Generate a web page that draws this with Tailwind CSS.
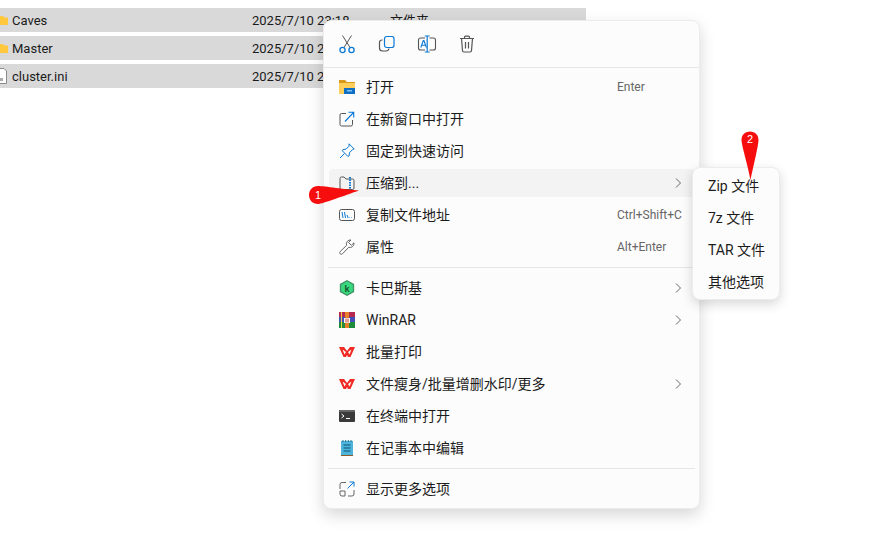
<!DOCTYPE html>
<html><head><meta charset="utf-8"><script src="https://cdn.jsdelivr.net/npm/@tailwindcss/browser@4"></script></head>
<body class="bg-white overflow-hidden">
<div class="relative w-[893px] h-[554px] overflow-hidden bg-white text-[#1b1b1b] font-['Roboto','Noto_Sans_CJK_SC',sans-serif]">
  <div class="flex flex-col gap-1 pt-2 w-[586px] text-[13px] leading-6">
    <div class="h-6 bg-[#d9d9d9] flex items-center">
      <svg class="w-2 h-6 shrink-0 mr-1" viewBox="0 0 8 24"><path d="M0 8h3l1.500 1.500H8V17H0z" fill="#ffc83d"/></svg>
      <span class="w-[240px] pt-px">Caves</span><span class="w-[138px] pt-px">2025/7/10 23:18</span><span class="pt-px">文件夹</span>
    </div>
    <div class="h-6 bg-[#d9d9d9] flex items-center">
      <svg class="w-2 h-6 shrink-0 mr-1" viewBox="0 0 8 24"><path d="M0 8h3l1.500 1.500H8V17H0z" fill="#ffc83d"/></svg>
      <span class="w-[240px] pt-px">Master</span><span class="pt-px">2025/7/10 23:18</span>
    </div>
    <div class="h-6 bg-[#d9d9d9] flex items-center">
      <svg class="w-2 h-6 shrink-0 mr-1" viewBox="0 0 8 24"><path d="M-2 4.500h6l2.500 2.500v12.500H-2z" fill="#fff" stroke="#8a8a8a"/><path d="M0 14h3v3H0z" fill="#aaa"/></svg>
      <span class="w-[240px] pt-px">cluster.ini</span><span class="pt-px">2025/7/10 23:18</span>
    </div>
  </div>

  <!-- main context menu -->
  <div class="absolute left-[323px] top-[20px] w-[377px] h-[489px] rounded-lg bg-[#fcfcfc] border border-[#ececec] shadow-[0_6px_16px_rgba(0,0,0,0.16)] text-[14px] flex flex-col">
    <div class="h-[46px] flex items-center gap-[20px] pl-[13px] shrink-0">
      <svg class="w-5 h-5" viewBox="0 0 20 20" fill="none"><path d="M5.500 1.500l7.500 12M14.500 1.500L7 13.500" stroke="#555" stroke-width="1"/><circle cx="5.500" cy="16" r="2.600" stroke="#0a78d4" stroke-width="1.300"/><circle cx="14.500" cy="16" r="2.600" stroke="#0a78d4" stroke-width="1.300"/></svg>
      <svg class="w-5 h-5" viewBox="0 0 20 20" fill="none"><rect x="7.500" y="2.500" width="9.500" height="11" rx="2.200" stroke="#0a78d4" stroke-width="1.200"/><path d="M5.500 6H5a2.500 2.500 0 0 0-2.500 2.500V14A3 3 0 0 0 5.500 17H9a3 3 0 0 0 3-2.500" stroke="#555" stroke-width="1.200"/></svg>
      <svg class="w-5 h-5" viewBox="0 0 20 20" fill="none"><path d="M8 4H3.500a2 2 0 0 0-2 2v8a2 2 0 0 0 2 2H8M12.500 4h4a2 2 0 0 1 2 2v8a2 2 0 0 1-2 2h-4" stroke="#555" stroke-width="1.100"/><path d="M7.800 2h4.900M7.800 18h4.900M10.200 2v16" stroke="#0a78d4" stroke-width="1.200"/><path d="M3.800 13.500L6.300 6.500h.6l2.500 7M4.700 11.300h3.800" stroke="#0a78d4" stroke-width="1.100"/></svg>
      <svg class="w-5 h-5" viewBox="0 0 20 20" fill="none"><path d="M3 4.500h14M7.500 4.500V3.200a1 1 0 0 1 1-1h3a1 1 0 0 1 1 1v1.300M4.500 4.500l1 12a1.500 1.500 0 0 0 1.500 1.500h6a1.500 1.500 0 0 0 1.500-1.500l1-12M8.500 8v6.500M11.500 8v6.500" stroke="#555" stroke-width="1.200"/></svg>
    </div>
    <div class="h-px bg-[#e6e6e6] shrink-0"></div>

    <div class="flex flex-col px-[5px] pt-[3px]">
      <div class="h-7 my-0.5 flex items-center rounded pl-[10px] pr-[10px]">
        <svg class="w-4 h-4 mr-[11px] shrink-0" viewBox="0 0 16 16"><path d="M0 1h6l2 2h8v2H0z" fill="#d99a1c"/><path d="M0 4h16v11H0z" fill="#ffcf5c"/><path d="M5 9h11v6H5z" fill="#0f6fc4"/><path d="M8 11h5v1.500H8z" fill="#7fc0f0"/></svg>
        <span class="flex-1">打开</span><span class="text-[12px] text-[#666] w-[67px]">Enter</span>
      </div>
      <div class="h-7 my-0.5 flex items-center rounded pl-[10px] pr-[10px]">
        <svg class="w-4 h-4 mr-[11px] shrink-0" viewBox="0 0 16 16" fill="none"><path d="M7 2.500H2.500a1.500 1.500 0 0 0-1.500 1.500v9.500A1.500 1.500 0 0 0 2.500 15H12a1.500 1.500 0 0 0 1.500-1.500V9" stroke="#555"/><path d="M6 10.500L14.500 1.500M9.500 1.200h5.200v5.200" stroke="#0a78d4" stroke-width="1.100"/></svg>
        <span class="flex-1">在新窗口中打开</span>
      </div>
      <div class="h-7 my-0.5 flex items-center rounded pl-[10px] pr-[10px]">
        <svg class="w-4 h-4 mr-[11px] shrink-0" viewBox="0 0 16 16" fill="none"><path d="M10 .8l5.200 5.200-1.600 .6-3.100 3.100-.4 3.100-1.200 .6-5.600-5.600 .6-1.200 3.100-.4 3.100-3.100z" stroke="#0a78d4" stroke-linejoin="round"/><path d="M5.500 10.500L1 15" stroke="#0a78d4"/></svg>
        <span class="flex-1">固定到快速访问</span>
      </div>
      <div class="h-7 my-0.5 flex items-center rounded pl-[10px] pr-[10px] bg-[#f3f3f3]">
        <svg class="w-4 h-4 mr-[11px] shrink-0" viewBox="0 0 16 16" fill="none"><path d="M1 13V3.500A1.500 1.500 0 0 1 2.500 2H5l2 2h6.500A1.500 1.500 0 0 1 15 5.500V13a1.500 1.500 0 0 1-1.500 1.500h-11A1.500 1.500 0 0 1 1 13z" stroke="#555"/><path d="M11 2v12" stroke="#0a78d4" stroke-width="2" stroke-dasharray="1.500 1"/></svg>
        <span class="flex-1">压缩到...</span>
        <svg class="w-3 h-3 text-[#666]" viewBox="0 0 12 12" fill="none"><path d="M4 1.500L8.500 6 4 10.500" stroke="currentColor"/></svg>
      </div>
      <div class="h-7 my-0.5 flex items-center rounded pl-[10px] pr-[10px]">
        <svg class="w-4 h-4 mr-[11px] shrink-0" viewBox="0 0 16 16" fill="none"><rect x=".5" y="2.500" width="15" height="11" rx="2" stroke="#555"/><path d="M3 5l1 6M5.500 5l1 6M8 8l1.200 3M10.500 10.500v.5M12.500 10.500v.5" stroke="#0a78d4"/></svg>
        <span class="flex-1">复制文件地址</span><span class="text-[12px] text-[#666] w-[67px] whitespace-nowrap">Ctrl+Shift+C</span>
      </div>
      <div class="h-7 my-0.5 flex items-center rounded pl-[10px] pr-[10px]">
        <svg class="w-4 h-4 mr-[11px] shrink-0" viewBox="0 0 16 16" fill="none"><path d="M15 4.500a4 4 0 0 1-5.300 3.800L3.500 14.800a1.600 1.600 0 0 1-2.300-2.300l6.400-6.200A4 4 0 0 1 12 1l-2.500 2.500 2.800 2.800L15 3.800z" stroke="#666" stroke-linejoin="round"/></svg>
        <span class="flex-1">属性</span><span class="text-[12px] text-[#666] w-[67px]">Alt+Enter</span>
      </div>
    </div>
    <div class="h-px bg-[#e6e6e6] mx-[4px] my-[4px] shrink-0"></div>
    <div class="flex flex-col px-[5px]">
      <div class="h-7 my-0.5 flex items-center rounded pl-[10px] pr-[10px]">
        <svg class="w-4 h-4 mr-[11px] shrink-0" viewBox="0 0 16 16"><path d="M8 .8l6.500 3.700v7L8 15.200l-6.500-3.700v-7z" fill="#38d97c" stroke="#3f8f68" stroke-width="1.300"/><text x="8" y="11.500" text-anchor="middle" font-size="9" font-weight="700" fill="#14532d" font-family="Liberation Sans">k</text></svg>
        <span class="flex-1">卡巴斯基</span>
        <svg class="w-3 h-3 text-[#666]" viewBox="0 0 12 12" fill="none"><path d="M4 1.500L8.500 6 4 10.500" stroke="currentColor"/></svg>
      </div>
      <div class="h-7 my-0.5 flex items-center rounded pl-[10px] pr-[10px]">
        <svg class="w-4 h-4 mr-[11px] shrink-0" viewBox="0 0 16 16"><path d="M0 0h16v5H0z" fill="#b5294e"/><path d="M0 5h16v5H0z" fill="#4450b8"/><path d="M0 10h16v6H0z" fill="#1e8c3a"/><path d="M2 0h1v16H2z" fill="#f2d04a"/><path d="M6 0h4v16H6z" fill="#e8822a"/><path d="M5 6h6v5H5z" fill="#fff"/><path d="M6.500 6.500h1v4h-1zM8.500 6.500h1v4h-1z" fill="#c0392b"/></svg>
        <span class="flex-1">WinRAR</span>
        <svg class="w-3 h-3 text-[#666]" viewBox="0 0 12 12" fill="none"><path d="M4 1.500L8.500 6 4 10.500" stroke="currentColor"/></svg>
      </div>
      <div class="h-7 my-0.5 flex items-center rounded pl-[10px] pr-[10px]">
        <svg class="w-4 h-4 mr-[11px] shrink-0" viewBox="0 0 16 16"><path fill-rule="evenodd" d="M0 3h5l3 4 3-4h5l-4.500 10H9L8 11l-1 2H4.500zM3.500 5.500l2 5 1.500-2.500zM12.500 5.500L9 8l1.500 2.500z" fill="#ef2a22"/></svg>
        <span class="flex-1">批量打印</span>
      </div>
      <div class="h-7 my-0.5 flex items-center rounded pl-[10px] pr-[10px]">
        <svg class="w-4 h-4 mr-[11px] shrink-0" viewBox="0 0 16 16"><path fill-rule="evenodd" d="M0 3h5l3 4 3-4h5l-4.500 10H9L8 11l-1 2H4.500zM3.500 5.500l2 5 1.500-2.500zM12.500 5.500L9 8l1.500 2.500z" fill="#ef2a22"/></svg>
        <span class="flex-1">文件瘦身/批量增删水印/更多</span>
        <svg class="w-3 h-3 text-[#666]" viewBox="0 0 12 12" fill="none"><path d="M4 1.500L8.500 6 4 10.500" stroke="currentColor"/></svg>
      </div>
      <div class="h-7 my-0.5 flex items-center rounded pl-[10px] pr-[10px]">
        <svg class="w-4 h-4 mr-[11px] shrink-0" viewBox="0 0 16 16"><rect y="2" width="16" height="12" rx="1" fill="#3a3a3a"/><path d="M0 2h16v2H0z" fill="#666"/><path d="M2.500 6l2.500 2-2.500 2" stroke="#fff" fill="none"/><path d="M7 10.500h4" stroke="#fff"/></svg>
        <span class="flex-1">在终端中打开</span>
      </div>
      <div class="h-7 my-0.5 flex items-center rounded pl-[10px] pr-[10px]">
        <svg class="w-4 h-4 mr-[11px] shrink-0" viewBox="0 0 16 16"><path d="M2 1h12v14H2z" fill="#4db5dc"/><path d="M2 15h12v1H2z" fill="#8a5a2b"/><path d="M4 0v2M6.700 0v2M9.300 0v2M12 0v2" stroke="#1f6f94"/><path d="M4.500 5h7M4.500 8h7M4.500 11h7" stroke="#0d4f70"/></svg>
        <span class="flex-1">在记事本中编辑</span>
      </div>
    </div>
    <div class="h-px bg-[#e6e6e6] mx-[4px] my-[4px] shrink-0"></div>
    <div class="px-[5px]">
      <div class="h-7 my-0.5 flex items-center rounded pl-[10px] pr-[10px]">
        <svg class="w-4 h-4 mr-[11px] shrink-0" viewBox="0 0 16 16" fill="none"><path d="M7 1.500H3A2 2 0 0 0 1 3.500V8M1 10v3a2 2 0 0 0 2 2h3V10zM9 15h4a2 2 0 0 0 2-2V9" stroke="#666"/><path d="M8.500 7.500l6.500-6.500M10.500 1h4.500v4.500" stroke="#0a78d4"/></svg>
        <span class="flex-1">显示更多选项</span>
      </div>
    </div>
  </div>

  <!-- submenu -->
  <div class="absolute left-[692px] top-[167px] w-[88px] h-[133px] rounded-lg bg-[#fcfcfc] border border-[#ececec] shadow-[0_4px_12px_rgba(0,0,0,0.16)] text-[14px] flex flex-col pt-[2px] pl-[15px]">
    <div class="h-8 flex items-center whitespace-nowrap">Zip 文件</div>
    <div class="h-8 flex items-center whitespace-nowrap">7z 文件</div>
    <div class="h-8 flex items-center whitespace-nowrap">TAR 文件</div>
    <div class="h-8 flex items-center whitespace-nowrap">其他选项</div>
  </div>

  <!-- annotation pins -->
  <svg class="absolute left-[308px] top-[185px] w-[52px] h-[20px]" viewBox="0 0 52 20"><path d="M10 1C4.500 1 1 5 1 10s3.500 9 9 9C14 19 38 10 51 5.500 38 4.500 16 1 10 1z" fill="#f60d0d"/><text x="10" y="14" text-anchor="middle" font-size="11" fill="#fff" font-family="Liberation Sans">1</text></svg>
  <svg class="absolute left-[741px] top-[131px] w-[18px] h-[50px]" viewBox="0 0 18 50"><path d="M.5 9C.5 4 4 .5 9 .5s8.500 3.500 8.500 8.500c0 5-5 26-8 40C7 35 .5 14 .5 9z" fill="#f60d0d"/><text x="9" y="12" text-anchor="middle" font-size="11" fill="#fff" font-family="Liberation Sans">2</text></svg>
</div>
</body></html>
